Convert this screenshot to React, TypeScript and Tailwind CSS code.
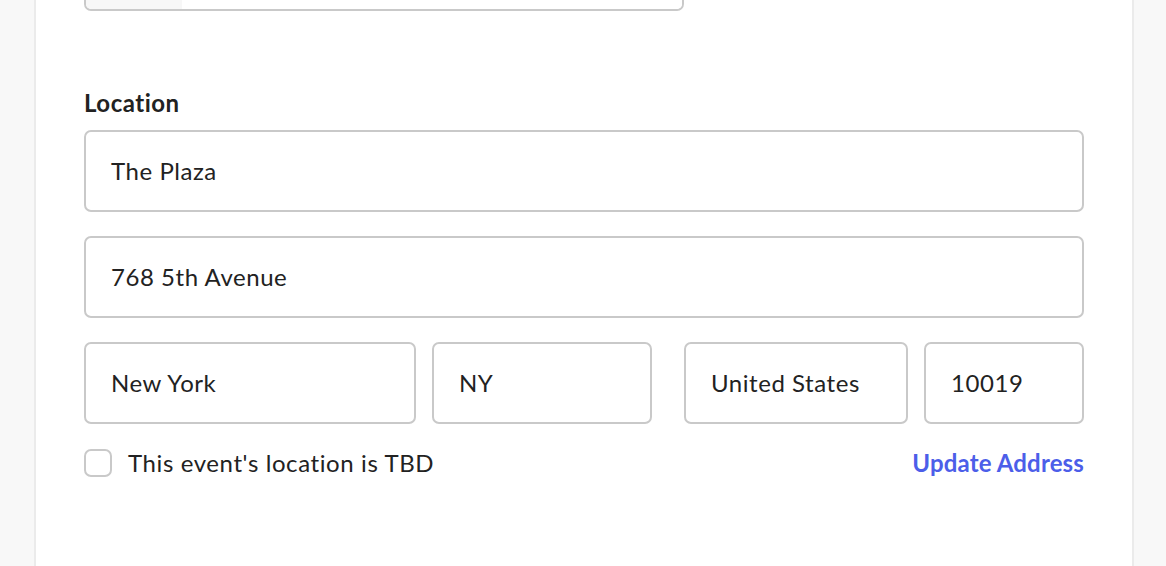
const Field = ({ value, className }: { value: string; className?: string }) => (
  <div
    className={
      "h-[82px] flex items-center rounded-[7px] border-2 border-[#c9c9c9] bg-white px-[25px] text-[24px] tracking-[0.55px] text-[#222] " +
      (className ?? "")
    }
  >
    {value}
  </div>
);

export default function App() {
  return (
    <div
      className="h-[566px] overflow-hidden bg-[#f8f8f8] pl-[34px]"
      style={{ fontFamily: "Lato, 'Noto Sans', sans-serif" }}
    >
      <div className="flex h-full w-[1100px] flex-col border-x-2 border-[#ebebeb] bg-white px-12">
        <div className="-mt-[71px] flex h-[82px] w-[600px] shrink-0 overflow-hidden rounded-[7px] border-2 border-[#c9c9c9]">
          <div className="w-[96px] bg-[#f7f7f7]" />
          <div className="flex-1 bg-white" />
        </div>

        <div className="mt-[80px] text-[24px] font-bold leading-6 tracking-[0.5px] text-[#222]">Location</div>

        <div className="mt-[15px] flex flex-col gap-[24px]">
          <Field value="The Plaza" />
          <Field value="768 5th Avenue" />
          <div className="flex">
            <Field value="New York" className="w-[332px]" />
            <Field value="NY" className="ml-[16px] w-[220px]" />
            <Field value="United States" className="ml-[32px] w-[224px]" />
            <Field value="10019" className="ml-[16px] w-[160px]" />
          </div>
        </div>

        <div className="mt-[25px] flex items-center justify-between leading-[28px]">
          <label className="flex items-center gap-[16px] text-[24px] tracking-[0.6px] text-[#222]">
            <span className="h-[28px] w-[28px] rounded-[7px] border-2 border-[#c9c9c9] bg-white" />
            This event's location is TBD
          </label>
          <a className="text-[24px] font-bold tracking-[0.15px] text-[#4c5ee9]">Update Address</a>
        </div>
      </div>
    </div>
  );
}
